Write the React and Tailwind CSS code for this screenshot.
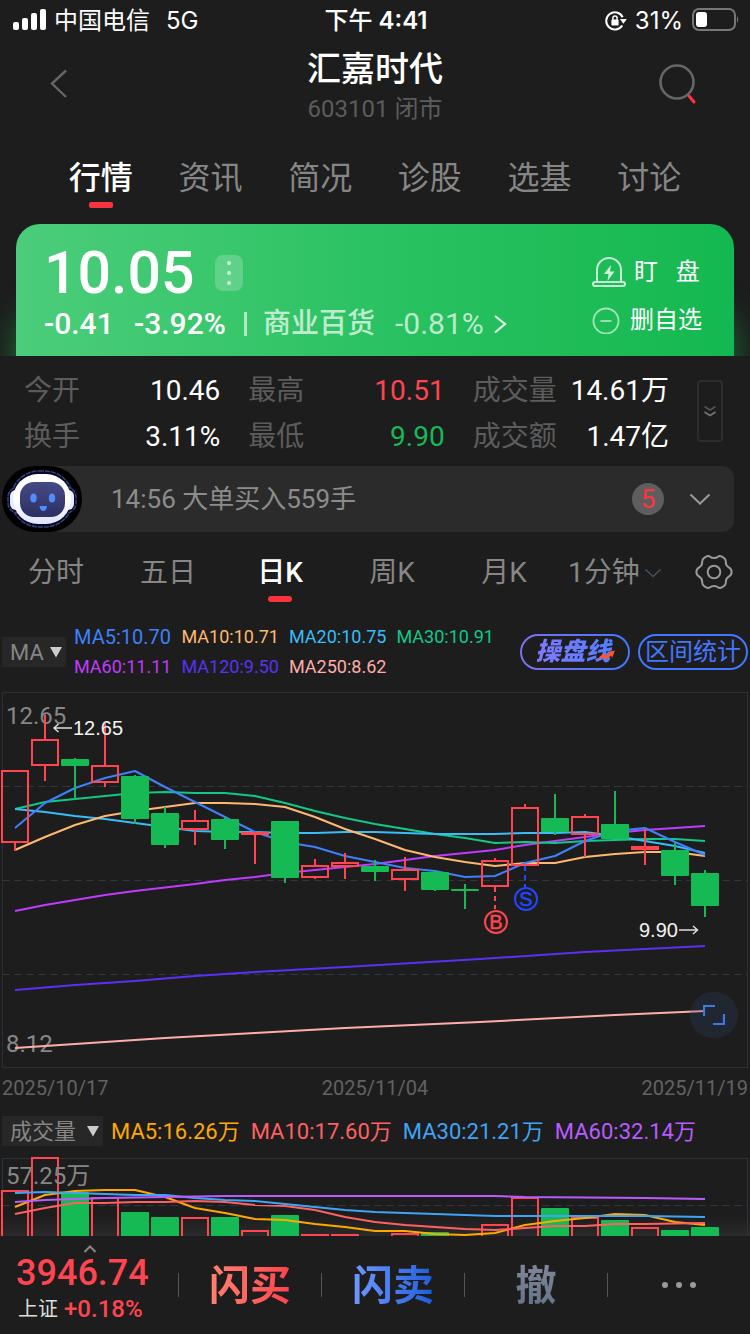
import React from "react";

const UP = "#ff4550";
const DOWN = "#16ba55";

/* direction, body top, body bottom, high, low */
const CANDLES = [
  ["up", 770, 843, 770, 851],
  ["up", 739, 766, 715, 781],
  ["down", 759, 766, 758, 799],
  ["up", 765, 783, 723, 787],
  ["down", 776, 819, 775, 824],
  ["down", 813, 845, 807, 848],
  ["up", 820, 830, 810, 845],
  ["down", 819, 840, 817, 849],
  ["up", 832, 835, 832, 864],
  ["down", 821, 878, 821, 883],
  ["up", 865, 878, 859, 879],
  ["up", 862, 867, 853, 879],
  ["down", 866, 872, 860, 881],
  ["up", 869, 880, 857, 891],
  ["down", 872, 890, 870, 891],
  ["down", 889, 891, 884, 909],
  ["up", 860, 887, 858, 887],
  ["up", 807, 866, 804, 866],
  ["down", 818, 832, 794, 835],
  ["up", 816, 835, 814, 857],
  ["down", 824, 839, 791, 839],
  ["up", 846, 850, 829, 865],
  ["down", 850, 876, 843, 885],
  ["down", 873, 906, 870, 917],
];

const PRICE_LINES = [
  ["#5a31f4", "15,990 75,985 135,981 195,976 255,972 345,967 480,959 585,952 645,949 705,946"],
  ["#ffacac", "15,1048 75,1044 165,1038 255,1033 345,1028 480,1022 615,1015 705,1011"],
  ["#c13bff", "15,911 45,905 75,900 105,895 135,891 195,884 225,880 255,877 285,873 315,870 345,867 375,864 405,860 435,856 465,853 495,850 525,845 555,841 585,837 615,833 645,830 675,828 705,826"],
  ["#10c987", "15,809 45,802 75,799 105,796 135,793 165,792 195,793 225,793 255,796 285,803 315,811 345,818 375,824 405,829 435,834 465,838 495,843 525,842 555,843 585,841 615,840 645,839 675,839 705,841"],
  ["#38bdf8", "15,809 45,812 75,816 105,819 135,823 165,827 195,831 225,832 255,832 285,833 315,833 345,832 375,832 405,833 435,834 465,834 495,834 525,833 555,833 585,832 615,836 645,841 675,846 705,853"],
  ["#ffb871", "15,850 45,837 75,825 105,816 135,811 165,807 195,803 225,803 255,804 285,807 315,817 345,829 375,839 405,850 435,857 465,862 495,866 525,863 555,863 585,857 615,854 645,852 675,852 705,856"],
  ["#3f80fb", "15,828 45,803 75,788 105,778 135,771 165,787 195,802 225,817 255,832 285,842 315,847 345,856 375,862 405,868 435,871 465,877 495,876 525,863 555,856 585,841 615,831 645,828 675,842 705,855"],
];

const VOLUMES = [
  ["up", 1191], ["up", 1158], ["down", 1192], ["up", 1198], ["down", 1212], ["down", 1217],
  ["up", 1218], ["down", 1217], ["up", 1231], ["down", 1215], ["up", 1235], ["up", 1235],
  ["down", 1238], ["up", 1234], ["down", 1232], ["down", 1238], ["up", 1225], ["up", 1198],
  ["down", 1208], ["up", 1218], ["down", 1220], ["up", 1228], ["down", 1230], ["down", 1227],
];

const VOLUME_LINES = [
  ["#ffa800", "15,1207 45,1195 75,1191 105,1190 135,1190 165,1197 195,1208 225,1213 255,1219 285,1220 315,1224 345,1227 375,1231 405,1231 435,1234 465,1235 495,1233 525,1225 555,1221 585,1218 615,1214 645,1215 675,1222 705,1225"],
  ["#ff6060", "15,1214 45,1208 75,1203 105,1203 135,1202 165,1202 195,1201 225,1202 255,1205 285,1206 315,1210 345,1217 375,1222 405,1225 435,1227 465,1229 495,1230 525,1228 555,1226 585,1226 615,1224 645,1224 705,1223"],
  ["#3fa4f5", "15,1193 45,1192 75,1193 105,1194 135,1195 165,1195 195,1198 225,1200 255,1201 285,1204 315,1207 345,1210 375,1212 405,1213 435,1214 465,1215 495,1216 555,1216 645,1216 705,1217"],
  ["#b95cff", "15,1202 45,1200 75,1199 105,1198 165,1197 225,1196 345,1196 495,1196 525,1197 645,1198 705,1199"],
];

function StatusBar() {
  return (
    <div className="grid h-10 grid-cols-3 items-center pt-[2px] pl-3 pr-[10px] font-['Inter','Noto_Sans_CJK_SC',sans-serif] text-2xl">
      <div className="flex items-center">
        <svg className="mb-1 mr-2 h-[22px] w-[34px]" viewBox="0 0 34 22" fill="#fff">
          <rect x="1" y="14" width="6" height="8" rx="2" />
          <rect x="10" y="10" width="6" height="12" rx="2" />
          <rect x="19" y="5" width="6" height="17" rx="2" />
          <rect x="28" y="1" width="6" height="21" rx="2" />
        </svg>
        <span className="whitespace-nowrap">中国电信</span>
        <span className="ml-4">5G</span>
      </div>
      <div className="whitespace-nowrap text-center font-semibold">
        <span className="font-medium">下午</span> 4:41
      </div>
      <div className="flex items-center justify-end">
        <svg className="h-[20px] w-[22px]" viewBox="0 0 22 20" fill="none" stroke="#fff" strokeWidth="2">
          <path d="M17.6 6.200A8.600 8.600 0 1 0 17.200 14.400" />
          <path d="M15 8h6.800l-3.400 4.800z" fill="#fff" stroke="none" />
          <rect x="6.400" y="8.600" width="7.200" height="5.800" rx="1" fill="#fff" stroke="none" />
          <path d="M7.900 9V7.200a2.100 2.100 0 0 1 4.200 0V9" strokeWidth="1.500" />
        </svg>
        <span className="ml-2">31%</span>
        <svg className="mb-1 ml-2 h-6 w-[49px]" viewBox="0 0 49 24" fill="none">
          <rect x="2" y="2" width="42" height="21" rx="6" stroke="#777" strokeWidth="2" />
          <rect x="5" y="5" width="11" height="15" rx="3" fill="#fff" />
          <path d="M46 9q2.500 3.500 0 7z" fill="#777" />
        </svg>
      </div>
    </div>
  );
}

function Header() {
  return (
    <header className="grid h-[102px] grid-cols-[1fr_auto_1fr] items-start px-10">
      <button aria-label="返回" className="mt-6 flex h-10 w-10 items-center justify-center">
        <svg className="h-8 w-6" viewBox="0 0 24 32" fill="none" stroke="#666" strokeWidth="2.400">
          <path d="M18 2.500 4 15.500l14 13.500" />
        </svg>
      </button>
      <div className="flex flex-col items-center pt-1">
        <h1 className="text-[34px] font-medium leading-[50px]">汇嘉时代</h1>
        <p className="text-2xl leading-[30px] text-[#5c5c5c]">603101 闭市</p>
      </div>
      <button aria-label="搜索" className="mt-5 flex h-12 w-[66px] items-center justify-center justify-self-end">
        <svg className="h-12 w-12" viewBox="0 0 48 48" fill="none">
          <circle cx="24" cy="22" r="16.500" stroke="#666" strokeWidth="2.600" />
          <path d="M36 36l5 6" stroke="#fb3440" strokeWidth="3" strokeLinecap="round" />
        </svg>
      </button>
    </header>
  );
}

function MainTabs() {
  const tabs = ["行情", "资讯", "简况", "诊股", "选基", "讨论"];
  return (
    <nav className="grid grid-cols-6 px-[46px] pt-3 pb-4">
      {tabs.map((t, i) => (
        <a
          key={t}
          href="#"
          className={
            i === 0
              ? "flex flex-col items-center text-[32px] font-medium leading-[48px] text-white"
              : "flex flex-col items-center text-[32px] leading-[48px] text-[#868686]"
          }
        >
          {t}
          {i === 0 && <span className="h-[6px] w-6 rounded-xs bg-[#f9343f]" />}
        </a>
      ))}
    </nav>
  );
}

function PriceCard() {
  return (
    <section className="overflow-hidden px-4">
      <div className="flex h-[132px] justify-between rounded-t-3xl bg-linear-to-r from-[#4bcd7b] via-[#2ac262] to-[#13b850] pl-7 pr-8 shadow-[0_90px_32px_0_#16ba5588]">
        <div className="flex flex-col">
          <div className="flex items-center pt-4">
            <span className="text-[59px] font-medium leading-[66px]">10.05</span>
            <button aria-label="更多" className="ml-5 flex h-9 w-7 flex-col items-center justify-center gap-[6px] rounded-lg bg-white/20">
              <span className="h-1 w-1 rounded-full bg-white/70" />
              <span className="h-1 w-1 rounded-full bg-white/70" />
              <span className="h-1 w-1 rounded-full bg-white/70" />
            </button>
          </div>
          <div className="flex items-center text-[30px] leading-9">
            <span className="w-[90px] font-medium">-0.41</span>
            <span className="w-[110px] font-medium">-3.92%</span>
            <span className="h-6 w-[3px] bg-white/60" />
            <a href="#" className="ml-4 flex items-center whitespace-nowrap text-white/70">
              <span className="text-[28px] font-medium">商业百货</span>
              <span className="ml-5">-0.81%</span>
              <svg className="ml-2 h-6 w-4" viewBox="0 0 16 24" fill="none" stroke="#fff" strokeOpacity="0.850" strokeWidth="2.200">
                <path d="M3 4l10 8-10 8.500" />
              </svg>
            </a>
          </div>
        </div>
        <div className="flex flex-col gap-3 pt-[30px] text-2xl leading-9">
          <button className="flex items-center gap-2">
            <svg className="h-9 w-[34px]" viewBox="0 0 34 36" fill="none" stroke="#fff" strokeOpacity="0.750" strokeWidth="2">
              <path d="M5 28V16a12 12 0 0 1 24 0v12" />
              <rect x="1" y="28" width="32" height="4" rx="2" />
              <path d="M19 11l-7 9h4.500l-1 7 7-9.500H18z" fill="#fff" fillOpacity="0.800" stroke="none" />
            </svg>
            <span>盯&nbsp;&nbsp;&nbsp;盘</span>
          </button>
          <button className="flex items-center gap-2">
            <svg className="h-7 w-[30px]" viewBox="0 0 30 28" fill="none" stroke="#fff" strokeOpacity="0.600" strokeWidth="1.800">
              <circle cx="14" cy="15" r="12.500" />
              <path d="M8.500 15h11" />
            </svg>
            <span>删自选</span>
          </button>
        </div>
      </div>
    </section>
  );
}

function Stat({ label, value, tone }) {
  return (
    <div className="flex justify-between whitespace-nowrap">
      <dt className="text-[#5c5c5c]">{label}</dt>
      <dd className={tone}>{value}</dd>
    </div>
  );
}

function Stats() {
  return (
    <section className="flex items-center gap-7 pt-3 pb-[6px] pl-6 pr-[27px]">
      <dl className="grid flex-1 grid-cols-3 gap-x-7 text-[28px] leading-[46px] text-white">
        <Stat label="今开" value="10.46" />
        <Stat label="最高" value="10.51" tone="text-[#ff4550]" />
        <Stat label="成交量" value="14.61万" />
        <Stat label="换手" value="3.11%" />
        <Stat label="最低" value="9.90" tone="text-[#16ba55]" />
        <Stat label="成交额" value="1.47亿" />
      </dl>
      <button aria-label="展开" className="mb-[6px] flex h-[62px] w-[26px] items-center justify-center rounded border-2 border-[#2d2d2d]">
        <svg className="h-4 w-3" viewBox="0 0 12 16" fill="none" stroke="#777" strokeWidth="1.500">
          <path d="M0.500 3.500 6 7l5.500-3.500" stroke="#555" />
          <path d="M0.500 9 6 12.500 11.500 9" />
        </svg>
      </button>
    </section>
  );
}

function Robot() {
  return (
    <svg className="h-[66px] w-20 shrink-0" viewBox="0 0 80 66">
      <defs>
        <linearGradient id="face" x1="0" y1="0" x2="0" y2="1">
          <stop offset="0" stopColor="#454a86" />
          <stop offset="1" stopColor="#2b3062" />
        </linearGradient>
        <linearGradient id="shell" x1="0" y1="0" x2="0" y2="1">
          <stop offset="0.500" stopColor="#ffffff" />
          <stop offset="1" stopColor="#dfe3ff" />
        </linearGradient>
      </defs>
      <rect width="80" height="66" rx="33" fill="#000" />
      <rect x="9" y="5" width="62" height="56" rx="28" fill="#080b20" stroke="#34407f" strokeWidth="1.500" strokeDasharray="5 1" />
      <rect x="6" y="21" width="68" height="26" rx="10" fill="#080b20" stroke="#34407f" strokeWidth="1.500" strokeDasharray="5 1" />
      <rect x="8" y="24" width="64" height="20" rx="6" fill="#e8ebff" />
      <rect x="11" y="8" width="58" height="50" rx="25" fill="url(#shell)" />
      <rect x="18" y="16" width="45" height="35" rx="14" fill="url(#face)" />
      <ellipse cx="31.500" cy="32" rx="3.200" ry="4.500" fill="#528bff" />
      <ellipse cx="50" cy="32" rx="3.200" ry="4.500" fill="#528bff" />
      <path d="M37.500 40h7.500q-.5 5-3.700 5t-3.800-5z" fill="#528bff" />
    </svg>
  );
}

function Notice() {
  return (
    <section className="pl-[2px] pr-4">
      <div className="flex h-[66px] items-center rounded-l-[33px] rounded-r-xl bg-[#2b2b2b]">
        <Robot />
        <span className="ml-[29px] flex-1 text-[26px] text-[#8c8c8c]">14:56 大单买入559手</span>
        <span className="flex h-8 w-8 items-center justify-center rounded-full bg-[#5e5e5e] text-[26px] text-[#ff3540]">5</span>
        <button aria-label="展开消息" className="ml-6 mr-[22px] flex h-8 w-6 items-center justify-center">
          <svg className="h-3 w-[22px]" viewBox="0 0 22 12" fill="none" stroke="#999" strokeWidth="2">
            <path d="M1.500 1.500 11 10.500l9.500-9" />
          </svg>
        </button>
      </div>
    </section>
  );
}

function PeriodTabs() {
  const tabs = ["分时", "五日", "日K", "周K", "月K"];
  return (
    <nav className="grid grid-cols-[minmax(0,56fr)_minmax(0,19fr)] items-start pt-[18px] text-[28px] leading-[46px] text-[#868686]">
      <div className="grid grid-cols-5">
        {tabs.map((t) => (
          <a key={t} href="#" className={t === "日K" ? "flex flex-col items-center font-medium text-white" : "flex flex-col items-center"}>
            {t}
            {t === "日K" && <span className="h-[6px] w-6 rounded-full bg-[#f9343f]" />}
          </a>
        ))}
      </div>
      <div className="flex items-center justify-between pl-2 pr-[17px]">
        <label className="flex items-center">
          <span className="sr-only">分钟周期</span>
          <select className="h-[46px] w-[77px] appearance-none bg-transparent outline-none">
            <option>1分钟</option>
          </select>
          <svg className="h-[10px] w-[16px]" viewBox="0 0 16 10" fill="none" stroke="#45525e" strokeWidth="1.500">
            <path d="M0.500 1.500 8 8.500l7.500-7" />
          </svg>
        </label>
        <button aria-label="设置" className="mb-[2px]">
          <svg className="block h-[38px] w-[38px]" viewBox="0 0 38 38" fill="none" stroke="#999" strokeWidth="2">
            <path d="M19 5Q21.500 5 23 3.700Q24.800 2.500 26.800 3.600L28.800 4.800Q31 6.200 30.800 8.800Q30.600 12.600 33.800 14.400Q36.600 16 36.600 19Q36.600 22 33.800 23.600Q30.600 25.400 30.800 29.200Q31 31.800 28.800 33.200L26.800 34.400Q24.800 35.500 23 34.300Q21.500 33 19 33Q16.500 33 15 34.300Q13.200 35.500 11.200 34.400L9.200 33.200Q7 31.800 7.200 29.200Q7.400 25.400 4.200 23.600Q1.400 22 1.400 19Q1.400 16 4.200 14.400Q7.400 12.600 7.200 8.800Q7 6.200 9.200 4.800L11.200 3.600Q13.200 2.500 15 3.700Q16.500 5 19 5Z" />
            <circle cx="19" cy="19" r="6.300" />
          </svg>
        </button>
      </div>
    </nav>
  );
}

function Triangle() {
  return (
    <svg className="pointer-events-none h-3 w-3 shrink-0" viewBox="0 0 12 12" fill="#ccc">
      <path d="M0 1h12L6 11.500z" />
    </svg>
  );
}

function PriceLegend() {
  return (
    <section className="flex items-center pt-5 pb-2 pl-[2px] pr-[2px]">
      <label className="flex h-[30px] items-center bg-[#272727] pl-2 pr-1 text-[22px] text-[#868686]">
        <span className="sr-only">主图指标</span>
        <select className="h-9 w-10 appearance-none bg-transparent outline-none">
          <option>MA</option>
        </select>
        <Triangle />
      </label>
      <ul className="ml-2 grid flex-1 grid-cols-4 whitespace-nowrap text-lg leading-[30px]">
        <li className="text-xl leading-[30px] text-[#3f80fb]">MA5:10.70</li>
        <li className="text-[#ffb871]">MA10:10.71</li>
        <li className="text-[#38bdf8]">MA20:10.75</li>
        <li className="text-[#10c987]">MA30:10.91</li>
        <li className="text-[#c13bff]">MA60:11.11</li>
        <li className="text-[#5a31f4]">MA120:9.50</li>
        <li className="text-[#ffacac]">MA250:8.62</li>
      </ul>
      <div className="ml-4 flex gap-2">
        <button className="h-9 w-[110px] rounded-full bg-linear-to-r from-[#7a70f0] to-[#3f78ff] p-[2px]">
          <span className="flex h-8 items-center justify-center rounded-full bg-[#1d1d1d]">
            <span className="relative">
              <span className="bg-linear-to-r from-[#8078ff] to-[#4f7fff] bg-clip-text pr-1 text-[25px] font-black italic leading-8 text-transparent">操盘线</span>
              <svg className="absolute right-0 bottom-2 h-[10px] w-[18px]" viewBox="0 0 18 10" fill="#ff5533">
                <path d="M0 9.500 6 3.500l4 2L12.500 3 10 2l8-1.500L15 8l-1-2.500L10 9.500 6.500 7.500z" />
              </svg>
            </span>
          </span>
        </button>
        <button className="h-9 w-[110px] whitespace-nowrap rounded-full border-2 border-[#4477ff] text-2xl leading-8 text-[#4477ff]">
          区间统计
        </button>
      </div>
    </section>
  );
}

function Lines({ data }) {
  return data.map(([color, points]) => (
    <polyline key={color} points={points} fill="none" stroke={color} strokeWidth="2" strokeLinejoin="round" />
  ));
}

function PriceChart() {
  return (
    <div className="relative">
      <svg className="block w-full" viewBox="0 690 750 380" role="img" aria-label="日K线图">
        <rect x="2.500" y="692.500" width="745" height="375" fill="none" stroke="#2c3036" />
        <g stroke="#30363f" strokeDasharray="8 4">
          <path d="M2 786.500H748" />
          <path d="M2 880.500H748" />
          <path d="M2 974.500H748" />
        </g>
        <text x="6" y="724" fontSize="24" fill="#868686">12.65</text>
        <text x="6" y="1052" fontSize="24" fill="#868686">8.12</text>
        <Lines data={PRICE_LINES} />
        {CANDLES.map(([dir, top, bottom, high, low], i) => {
          const x = 15 + i * 30;
          return dir === "down" ? (
            <g key={i} fill={DOWN}>
              <rect x={x - 14} y={top} width="28" height={bottom - top} rx="1" />
              <rect x={x - 1} y={high} width="2" height={low - high} />
            </g>
          ) : (
            <g key={i} fill="none" stroke={UP} strokeWidth="2">
              <rect x={x - 13} y={top + 1} width="26" height={bottom - top - 2} />
              <path d={`M${x} ${high}V${top}M${x} ${bottom}V${low}`} />
            </g>
          );
        })}
        <g fill="none" strokeWidth="2">
          <path d="M495 887V909" stroke={UP} strokeDasharray="5 4" />
          <circle cx="496" cy="922" r="11" stroke={UP} />
          <path d="M525 866V887" stroke="#2346ff" strokeDasharray="5 4" />
          <circle cx="526" cy="899" r="11" stroke="#2346ff" />
        </g>
        <g className="font-['Liberation_Sans',sans-serif]" fontSize="20">
          <text x="496" y="929" textAnchor="middle" fill={UP} stroke={UP} strokeWidth="0.500">B</text>
          <text x="526" y="906" textAnchor="middle" fill="#2346ff" stroke="#2346ff" strokeWidth="0.500">S</text>
          <text x="73" y="735" fill="#f2f2f2">12.65</text>
          <text x="639" y="937" fill="#f2f2f2">9.90</text>
        </g>
        <g fill="none" stroke="#ddd" strokeWidth="1.500">
          <path d="M72 728H54M58.500 724 54 728l4.500 4" />
          <path d="M679 930H697M693 926l4.500 4-4.500 4" />
        </g>
      </svg>
      <button aria-label="全屏" className="absolute right-3 bottom-8 flex h-[46px] w-12 items-center justify-center rounded-full bg-[#2f4670]/25">
        <svg className="h-[22px] w-[22px]" viewBox="0 0 22 22" fill="none" stroke="#3e78e8" strokeWidth="2.200">
          <path d="M1 12V2H12" />
          <path d="M10 20H21V10" />
        </svg>
      </button>
    </div>
  );
}

function VolumeLegend() {
  return (
    <section className="flex h-[50px] items-center pl-[2px] text-[22px]">
      <label className="flex h-[30px] items-center justify-between bg-[#272727] pl-2 pr-1 text-[#868686]">
        <span className="sr-only">副图指标</span>
        <select className="h-9 w-[77px] appearance-none bg-transparent outline-none">
          <option>成交量</option>
        </select>
        <Triangle />
      </label>
      <ul className="ml-2 flex gap-[11px] whitespace-nowrap">
        <li className="text-[#ffa800]">MA5:16.26万</li>
        <li className="text-[#ff6060]">MA10:17.60万</li>
        <li className="text-[#3fa4f5]">MA30:21.21万</li>
        <li className="text-[#b95cff]">MA60:32.14万</li>
      </ul>
    </section>
  );
}

function VolumeChart() {
  return (
    <svg className="block w-full" viewBox="0 1156 750 80" role="img" aria-label="成交量图">
      <defs>
        <linearGradient id="fade" x1="0" y1="0" x2="0" y2="1">
          <stop offset="0" stopColor="#303030" stopOpacity="0" />
          <stop offset="1" stopColor="#303030" stopOpacity="0.700" />
        </linearGradient>
      </defs>
      <rect y="1216" width="750" height="20" fill="url(#fade)" />
      <path d="M2.500 1240V1158.500H747.500V1240" fill="none" stroke="#2b343a" />
      <path d="M2 1205.500H748" stroke="#30363f" strokeDasharray="8 4" />
      {VOLUMES.map(([dir, top], i) => {
        const x = 15 + i * 30;
        return dir === "down" ? (
          <rect key={i} x={x - 14} y={top} width="28" height="60" rx="1" fill={DOWN} />
        ) : (
          <rect key={i} x={x - 13} y={top} width="26" height="90" fill="none" stroke={UP} strokeWidth="2" />
        );
      })}
      <text x="6" y="1184" fontSize="24" fill="#868686">57.25万</text>
      <Lines data={VOLUME_LINES} />
    </svg>
  );
}

function BottomBar() {
  const item = "flex flex-1 items-center justify-center pt-1 font-bold";
  const divider = <span className="h-6 w-px shrink-0 bg-[#555]" />;
  return (
    <footer className="sticky bottom-0 flex h-[98px] items-center bg-[#1d1d1d] text-[41px] font-medium">
      <a href="#" className="flex w-[178px] flex-col pl-4 text-[#ff4550]">
        <svg className="ml-17 h-2 w-3" viewBox="0 0 12 8" fill="none" stroke="#888" strokeWidth="2">
          <path d="M0.500 7 6 1.500 11.500 7" />
        </svg>
        <span className="text-4xl leading-10">3946.74</span>
        <span className="flex items-center text-2xl leading-8">
          <span className="mx-[2px] text-xl font-normal text-[#ddd]">上证</span>
          <span className="ml-1">+0.18%</span>
        </span>
      </a>
      {divider}
      <button className={item}>
        <span className="bg-linear-to-r from-[#ff8070] to-[#ff404e] bg-clip-text text-transparent">闪买</span>
      </button>
      {divider}
      <button className={item}>
        <span className="bg-linear-to-r from-[#7098ff] to-[#1d5edb] bg-clip-text text-transparent">闪卖</span>
      </button>
      {divider}
      <button className={item}>
        <span className="bg-linear-to-b from-[#858a9c] to-[#5f6e84] bg-clip-text text-transparent">撤</span>
      </button>
      {divider}
      <button aria-label="更多操作" className="flex flex-1 items-center justify-center gap-2">
        <span className="h-[6px] w-[6px] rounded-full bg-[#999]" />
        <span className="h-[6px] w-[6px] rounded-full bg-[#999]" />
        <span className="h-[6px] w-[6px] rounded-full bg-[#999]" />
      </button>
    </footer>
  );
}

export default function App() {
  return (
    <div className="flex min-h-screen flex-col bg-[#1d1d1d] font-['Roboto','Noto_Sans_CJK_SC',sans-serif] text-white">
      <StatusBar />
      <Header />
      <MainTabs />
      <PriceCard />
      <Stats />
      <Notice />
      <PeriodTabs />
      <PriceLegend />
      <PriceChart />
      <div className="flex h-9 items-center justify-between px-[2px] text-xl text-[#626262]">
        <span>2025/10/17</span>
        <span>2025/11/04</span>
        <span>2025/11/19</span>
      </div>
      <VolumeLegend />
      <VolumeChart />
      <BottomBar />
    </div>
  );
}
